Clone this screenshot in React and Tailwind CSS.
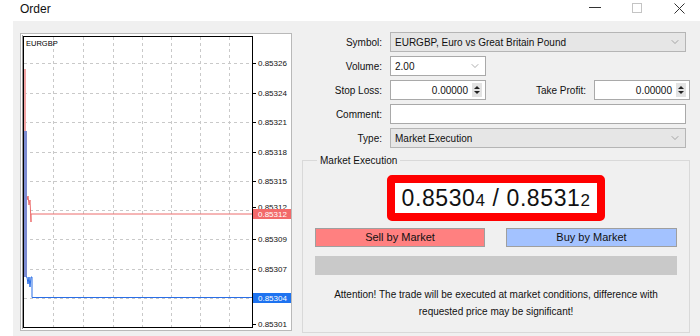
import React from "react";
import { ChevronDown } from "lucide-react";

const gridX = [32, 62, 92, 121, 150, 179, 208];
const gridY = [29, 59, 88, 118, 147, 176, 205, 235, 264];
const prices = [
  ["0.85326", 29],
  ["0.85324", 59],
  ["0.85321", 88],
  ["0.85318", 118],
  ["0.85315", 147],
  ["0.85312", 173],
  ["0.85309", 205],
  ["0.85307", 235],
  ["0.85304", 264],
  ["0.85301", 290],
];

const Chart = () => (
  <div className="mt-px h-[298px] w-[272px] shrink-0 border border-[#b9b9b9] bg-white">
    <svg width="270" height="296" className="block">
      <line x1="1.5" y1="1" x2="1.5" y2="295" stroke="#9a9a9a" />
      {/* grid */}
      {gridX.map((x) => (
        <line key={x} x1={x + 0.5} y1="3" x2={x + 0.5} y2="293" stroke="#c9c9c9" strokeDasharray="3 3" />
      ))}
      {gridY.map((y) => (
        <line key={y} x1="3" y1={y + 0.5} x2="231" y2={y + 0.5} stroke="#c9c9c9" strokeDasharray="3 3" />
      ))}
      <rect x="2.5" y="2.5" width="229" height="291" fill="none" stroke="#000" />
      {/* ticks + labels */}
      {prices.map(([p, y]) => (
        <g key={p}>
          <line x1="232" y1={y + 0.5} x2="235" y2={y + 0.5} stroke="#000" />
          <text x="237" y={y + 3} fontSize="8" fill="#111" fontFamily="Liberation Sans, Arial, sans-serif">
            {p}
          </text>
        </g>
      ))}
      <text x="5" y="12" fontSize="7.5" fill="#000" fontFamily="Liberation Sans, Arial, sans-serif">
        EURGBP
      </text>
      {/* ask line */}
      <rect x="3" y="35" width="2" height="124" fill="#f3a5a5" />
      <polyline
        points="4,159 5,159 6,166 7,162 8,171 9,166 10,188 10,180 11,180 231,180"
        fill="none"
        stroke="#ec6c6c"
      />
      {/* bid line */}
      <rect x="3" y="97" width="3" height="146" fill="#7d8cd2" />
      <polyline
        points="5,243 6,243 7,250 8,243 9,253 10,243 11,243 11,263.5 231,263.5"
        fill="none"
        stroke="#2a6ee6"
      />
      <rect x="232" y="175" width="38" height="10" fill="#f26a6a" />
      <text x="237" y="183" fontSize="8" fill="#fff" fontFamily="Liberation Sans, Arial, sans-serif">
        0.85312
      </text>
      <rect x="232" y="259" width="38" height="10" fill="#1e73f0" />
      <text x="237" y="267" fontSize="8" fill="#fff" fontFamily="Liberation Sans, Arial, sans-serif">
        0.85304
      </text>
    </svg>
  </div>
);

const Spinner = () => (
  <div className="mr-[3px] flex h-[14px] w-[10px] flex-col items-center justify-center gap-[2px] bg-[#e3e3e3]">
    <svg width="6" height="3" viewBox="0 0 6 3">
      <path d="M0 3 L3 0 L6 3 Z" fill="#222" />
    </svg>
    <svg width="6" height="3" viewBox="0 0 6 3">
      <path d="M0 0 L6 0 L3 3 Z" fill="#222" />
    </svg>
  </div>
);

const Row = ({ label, children }) => (
  <div className="flex h-[20px] items-center gap-[8px]">
    <div className="w-[80px] text-right">{label}</div>
    {children}
  </div>
);

const Chevron = () => <ChevronDown size={12} strokeWidth={1.2} className="mr-[4px] text-[#777]" />;

export default function App() {
  return (
    <div className="flex h-[336px] w-[700px] flex-col overflow-hidden bg-white font-['Liberation_Sans',Arial,sans-serif] text-[10px] text-[#111]">
      {/* title bar */}
      <div className="flex h-[21px] shrink-0 items-start">
        <div className="pl-[20px] pt-[1px] text-[12px] leading-[16px]">Order</div>
        <div className="flex-1" />
        <div className="flex h-[16px] items-center">
          <div className="flex w-[42px] justify-center">
            <svg width="12" height="2"><line x1="0" y1="0.5" x2="12" y2="0.5" stroke="#333" /></svg>
          </div>
          <div className="flex w-[42px] justify-center">
            <svg width="10" height="10"><rect x="0.5" y="0.5" width="9" height="9" fill="none" stroke="#c4c4c4" /></svg>
          </div>
          <div className="flex w-[42px] justify-center">
            <svg width="11" height="11">
              <path d="M0.5 0.5 L10.5 10.5 M10.5 0.5 L0.5 10.5" stroke="#333" />
            </svg>
          </div>
        </div>
      </div>

      {/* body */}
      <div className="ml-[13px] flex flex-1 items-start bg-[#f0f0f0] pl-[7px] pt-[11px]">
        <Chart />

        <div className="ml-[10px] w-[388px]">
          {/* form */}
          <div className="flex flex-col gap-[4px]">
            <Row label="Symbol:">
              <div className="flex h-[20px] w-[296px] items-center justify-between border border-[#b5b5b5] bg-[#e6e6e6] pl-[4px]">
                <span>EURGBP, Euro vs Great Britain Pound</span>
                <Chevron />
              </div>
            </Row>
            <Row label="Volume:">
              <div className="flex h-[20px] w-[96px] items-center justify-between border border-[#a9a9a9] bg-white pl-[4px]">
                <span>2.00</span>
                <Chevron />
              </div>
            </Row>
            <Row label="Stop Loss:">
              <div className="flex h-[20px] w-[96px] items-center border border-[#a9a9a9] bg-white">
                <span className="flex-1 pr-[4px] text-right">0.00000</span>
                <Spinner />
              </div>
              <div className="flex-1 text-right">Take Profit:</div>
              <div className="flex h-[20px] w-[96px] items-center border border-[#a9a9a9] bg-white">
                <span className="flex-1 pr-[4px] text-right">0.00000</span>
                <Spinner />
              </div>
            </Row>
            <Row label="Comment:">
              <div className="h-[20px] w-[296px] border border-[#a9a9a9] bg-white" />
            </Row>
            <Row label="Type:">
              <div className="flex h-[20px] w-[296px] items-center justify-between border border-[#b5b5b5] bg-[#e6e6e6] pl-[4px]">
                <span>Market Execution</span>
                <Chevron />
              </div>
            </Row>
          </div>

          {/* market execution group */}
          <fieldset className="mt-[6px] h-[179px] border border-[#d9d9d9] px-[12px]">
            <legend className="ml-[2px] px-[3px] leading-[13px]">Market Execution</legend>
            <div className="mx-auto mt-[8px] flex h-[46px] w-[218px] items-center justify-center rounded-[5px] border-[8px] border-[#ff0000] bg-white">
              <div className="text-[23px] leading-none tracking-[0.6px] text-[#111]">
                0.8530<span className="text-[17px]">4</span> / 0.8531<span className="text-[17px]">2</span>
              </div>
            </div>
            <div className="mt-[7px] flex justify-between">
              <div className="flex h-[19px] w-[170px] items-center justify-center border border-[#9f9f9f] bg-[#ff8080] text-[11px]">
                Sell by Market
              </div>
              <div className="flex h-[19px] w-[171px] items-center justify-center border border-[#9f9f9f] bg-[#a3c2ff] text-[11px]">
                Buy by Market
              </div>
            </div>
            <div className="mt-[9px] h-[19px] bg-[#c9c9c9]" />
            <p className="mt-[11px] text-center text-[10px] leading-[17px]">
              Attention! The trade will be executed at market conditions, difference with
              <br />
              requested price may be significant!
            </p>
          </fieldset>
        </div>
      </div>
    </div>
  );
}
